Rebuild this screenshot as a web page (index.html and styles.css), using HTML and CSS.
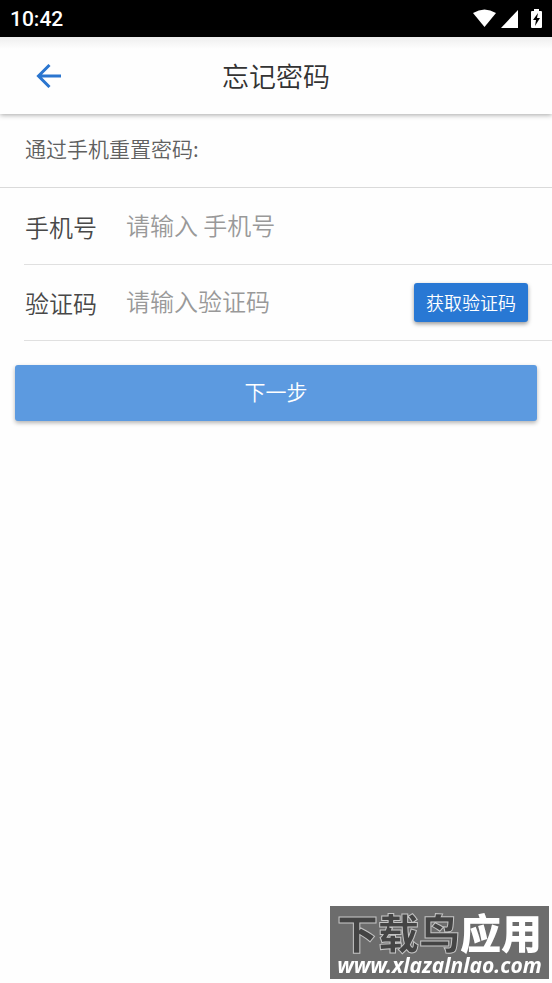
FILE: index.html
```html
<!DOCTYPE html>
<html lang="zh-CN">
<head>
<meta charset="utf-8">
<meta name="viewport" content="width=device-width, initial-scale=1">
<title>忘记密码</title>
<link rel="stylesheet" href="styles.css">
</head>
<body>
<div class="status">
  <span>10:42</span>
  <svg class="status-icons" width="72" height="20" viewBox="0 0 72 20" fill="#fff" aria-hidden="true">
    <path d="M1 4Q12.500-3 24 4L12.500 18Z"/>
    <path d="M46 1V19H29Z"/>
    <path fill-rule="evenodd" d="M62 0h5v2h2q1 0 1 1v15q0 1-1 1H60q-1 0-1-1V3q0-1 1-1h2ZM66 4l-5 7h3l-1 6 5-8h-3Z"/>
  </svg>
</div>
<header class="bar">
  <button class="back" type="button" aria-label="返回">
    <svg width="26" height="24" viewBox="0 0 26 24" fill="none" stroke="#2a75cf" stroke-width="3" aria-hidden="true"><path d="M25 12H3M13.500 1L2.500 12L13.500 23"/></svg>
  </button>
  <h1>忘记密码</h1>
</header>
<main>
  <h2 class="intro">通过手机重置密码:</h2>
  <form>
    <div class="row">
      <label for="phone">手机号</label>
      <input id="phone" type="tel" placeholder="请输入 手机号">
    </div>
    <div class="row">
      <label for="code">验证码</label>
      <input id="code" type="text" placeholder="请输入验证码">
      <button class="get-code" type="button">获取验证码</button>
    </div>
    <button class="next" type="submit">下一步</button>
  </form>
</main>
<aside class="mark">
  <div class="mark-name"><span>下载鸟</span>应用</div>
  <div class="mark-site">www.xlazalnlao.com</div>
</aside>
</body>
</html>
```
FILE: styles.css
```css
* { box-sizing: border-box; }
body {
  margin: 0;
  min-height: 100vh;
  background: #fefefe;
  color: #484848;
  font-family: "Noto Sans CJK SC", sans-serif;
  font-weight: 350;
}
button, input { font: inherit; border: 0; padding: 0; }
.status {
  display: flex;
  align-items: center;
  justify-content: space-between;
  height: 37px;
  padding: 0 8px 0 10px;
  background: #000;
  color: #fff;
  font-family: Roboto, sans-serif;
  font-size: 21px;
  font-weight: 500;
}
.bar {
  display: grid;
  grid-template-columns: 98px 1fr 98px;
  align-items: center;
  height: 77px;
  background: linear-gradient(#eee, #fefefe 12px);
  box-shadow: 0 1px 5px rgba(0, 0, 0, .35);
}
.back {
  display: flex;
  justify-content: center;
  background: none;
}
h1 {
  margin: 0;
  text-align: center;
  font-size: 27px;
  font-weight: 350;
  color: #333;
}
.intro {
  margin: 0;
  height: 74px;
  padding: 0 25px;
  border-bottom: 1px solid #dadada;
  font-size: 21px;
  line-height: 68px;
  font-weight: 350;
  color: #606060;
}
form { padding-top: 1px; }
.row {
  display: flex;
  align-items: center;
  height: 76px;
  margin-left: 24px;
  padding-right: 24px;
  border-bottom: 1px solid #e0e0e0;
  font-size: 24px;
}
.row label { width: 102px; padding-left: 1px; }
.row input {
  flex: 1;
  min-width: 0;
  padding-bottom: 4px;
  background: none;
  color: #444;
  outline: 0;
}
.row input::placeholder { color: #999; opacity: 1; }
.get-code {
  height: 39px;
  padding: 0 12px 2px;
  border-radius: 3px;
  background: #2878d4;
  color: #fff;
  font-size: 18px;
  line-height: 36px;
  box-shadow: 0 2px 4px rgba(0, 0, 0, .4);
}
.next {
  display: block;
  width: calc(100% - 30px);
  height: 56px;
  margin: 24px 15px;
  padding-bottom: 4px;
  border-radius: 3px;
  background: #5c9ae0;
  color: #fff;
  font-size: 21px;
  box-shadow: 0 2px 4px rgba(0, 0, 0, .3);
}
.mark {
  position: fixed;
  right: 3px;
  bottom: 4px;
  width: 219px;
  height: 73px;
  padding-top: 4px;
  background: #6c6c6c;
  color: #fff;
  text-align: center;
  white-space: nowrap;
}
.mark-name {
  font-size: 41px;
  line-height: 42px;
  font-weight: 900;
}
.mark-name span {
  color: #444;
  -webkit-text-stroke: 1px #c4c4c4;
}
.mark-site {
  font-family: "Noto Sans", sans-serif;
  font-size: 21px;
  line-height: 26px;
  font-weight: 700;
  font-style: italic;
}
```
